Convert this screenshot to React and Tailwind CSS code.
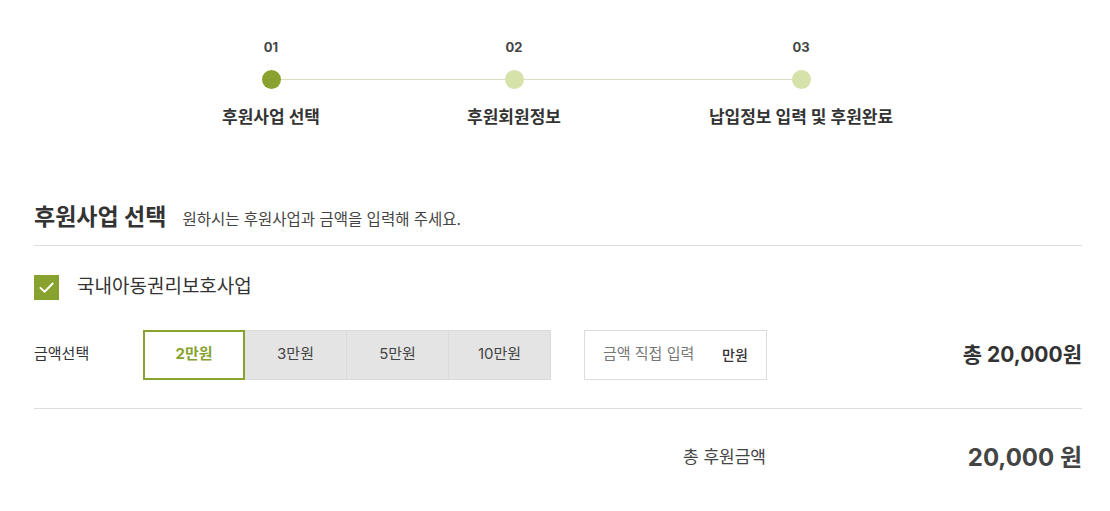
import React from "react";

const steps = [
  { n: "01", label: "후원사업 선택", active: true, ml: "ml-0" },
  { n: "02", label: "후원회원정보", active: false, ml: "ml-[43px]" },
  { n: "03", label: "납입정보 입력 및 후원완료", active: false, ml: "ml-[87px]" },
];

const amounts = ["2만원", "3만원", "5만원", "10만원"];

export default function App() {
  return (
    <div
      className="w-[1110px] h-[511px] bg-white text-[#333] overflow-hidden"
      style={{ fontFamily: "Inter, 'Noto Sans CJK KR', sans-serif" }}
    >
      {/* Stepper */}
      <div className="pt-[38px]">
        <div className="relative ml-[171px] flex">
          <div className="absolute left-[100px] w-[530px] top-[41px] h-px bg-[#d9dfc2]" />
          {steps.map((s) => (
            <div key={s.n} className={"relative w-[200px] flex flex-col items-center " + s.ml}>
              <div className="text-[13px] leading-[18px] font-bold text-[#444]">{s.n}</div>
              <div
                className={
                  "mt-[14px] w-[19px] h-[19px] rounded-full " +
                  (s.active ? "bg-[#87a22e]" : "bg-[#d7e1aa]")
                }
              />
              <div className="mt-[16px] text-[17px] leading-[24px] font-bold text-[#333] whitespace-nowrap">
                {s.label}
              </div>
            </div>
          ))}
        </div>
      </div>

      {/* Section */}
      <div className="ml-[34px] mr-[28px] mt-[73px]">
        <div className="flex items-baseline gap-[16px] pb-[13px] border-b border-[#dcdcdc]">
          <h2 className="text-[23px] leading-[30px] font-bold text-[#333]">후원사업 선택</h2>
          <p className="text-[15.5px] text-[#444]">원하시는 후원사업과 금액을 입력해 주세요.</p>
        </div>

        <div className="mt-[27px] flex items-center gap-[18px]">
          <div className="w-[25px] h-[25px] bg-[#87a22e] flex items-center justify-center">
            <svg width="17" height="17" viewBox="0 0 16 16" fill="none">
              <path d="M2.3 8.3 L6.2 12 L13.8 4.2" stroke="white" strokeWidth="1.8" strokeLinecap="round" strokeLinejoin="round" />
            </svg>
          </div>
          <span className="text-[19px] text-[#333]">국내아동권리보호사업</span>
        </div>

        <div className="mt-[28px] flex items-center h-[50px]">
          <div className="w-[109px] text-[15px] text-[#333]">금액선택</div>
          <div className="flex h-[50px]">
            {amounts.map((a, i) =>
              i === 0 ? (
                <div
                  key={a}
                  className="w-[102px] h-[50px] border-2 border-[#87a22e] bg-white flex items-center justify-center text-[15px] font-bold text-[#87a22e]"
                >
                  {a}
                </div>
              ) : (
                <div
                  key={a}
                  className="w-[102px] h-[50px] border border-[#dadada] border-l-0 bg-[#e4e4e4] flex items-center justify-center text-[15px] text-[#444]"
                >
                  {a}
                </div>
              )
            )}
          </div>
          <div className="ml-[33px] w-[183px] h-[50px] border border-[#dcdcdc] flex items-center pl-[18px]">
            <span className="text-[15px] text-[#777] w-[119px]">금액 직접 입력</span>
            <span className="text-[14px] font-medium text-[#333]">만원</span>
          </div>
          <div className="ml-auto text-[21px] font-bold text-[#333]">총 20,000원</div>
        </div>

        <div className="mt-[28px] border-t border-[#dcdcdc] pt-[33px] flex items-center">
          <span className="ml-[649px] text-[17px] text-[#444]">총 후원금액</span>
          <span className="ml-auto text-[24px] leading-[32px] font-bold text-[#444]">20,000 원</span>
        </div>
      </div>
    </div>
  );
}
